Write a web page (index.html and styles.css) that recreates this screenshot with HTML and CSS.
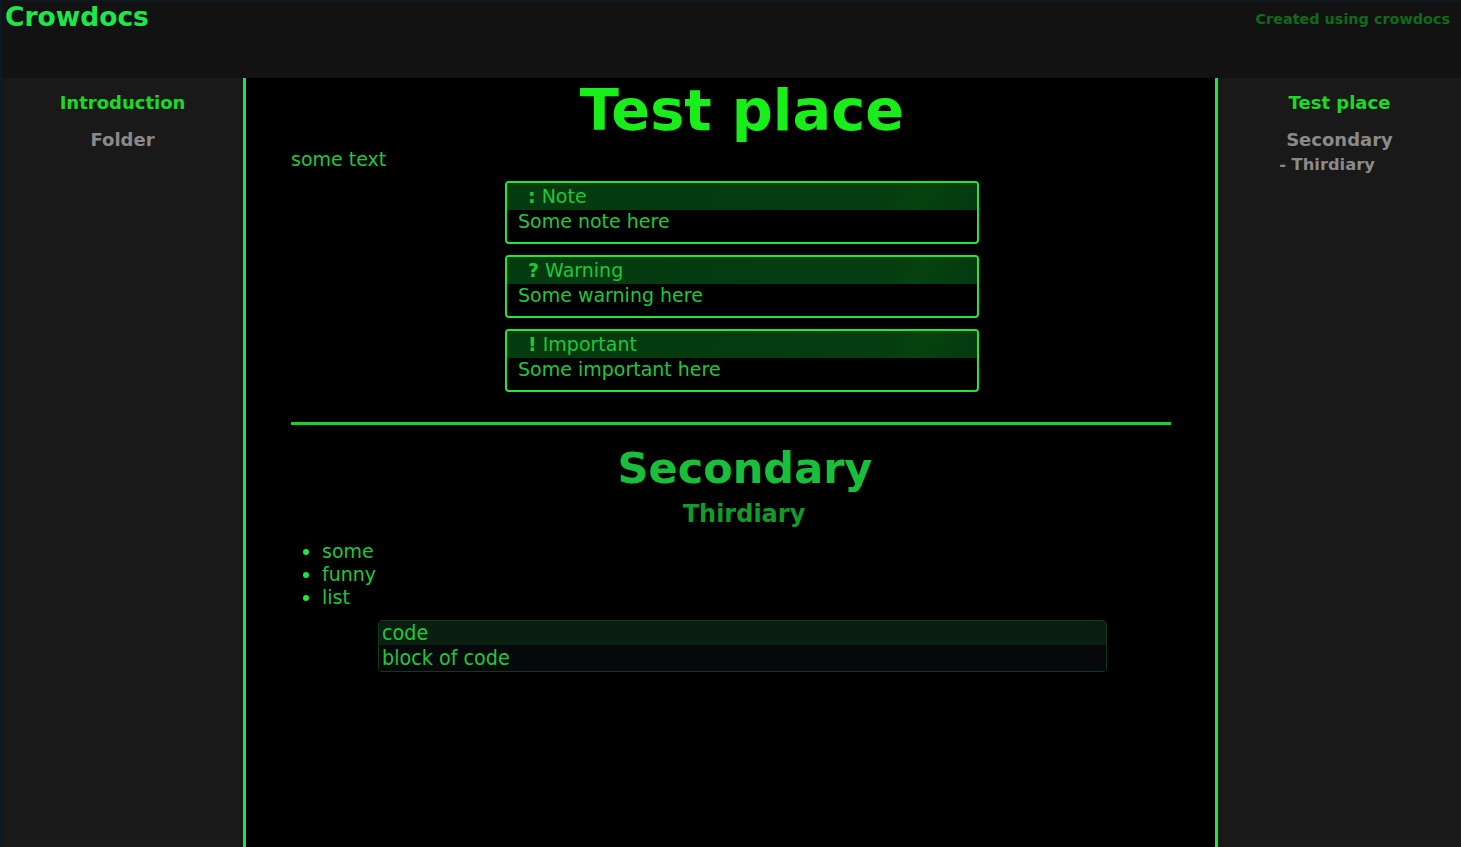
FILE: index.html
```html
<!DOCTYPE html>
<html>
<head>
<meta charset="utf-8">
<link rel="stylesheet" href="styles.css">
</head>
<body>
<header class="topbar">
  <div class="brand">Crowdocs</div>
  <div class="credit">Created using crowdocs</div>
</header>
<div class="layout">
  <nav class="side side-left">
    <div class="nav-active">Introduction</div>
    <div class="nav-item">Folder</div>
  </nav>
  <main class="main">
    <h1 class="title">Test place</h1>
    <p class="para">some text</p>
    <div class="callouts">
      <div class="callout">
        <div class="callout-head"><span class="ico">:</span> Note</div>
        <div class="callout-body">Some note here</div>
      </div>
      <div class="callout">
        <div class="callout-head"><span class="ico">?</span> Warning</div>
        <div class="callout-body">Some warning here</div>
      </div>
      <div class="callout">
        <div class="callout-head"><span class="ico">!</span> Important</div>
        <div class="callout-body">Some important here</div>
      </div>
    </div>
    <hr class="rule">
    <h2 class="h2">Secondary</h2>
    <h3 class="h3">Thirdiary</h3>
    <ul class="list">
      <li>some</li>
      <li>funny</li>
      <li>list</li>
    </ul>
    <div class="code">
      <div class="code-head">code</div>
      <div class="code-body">block of code</div>
    </div>
  </main>
  <nav class="side side-right">
    <div class="nav-active">Test place</div>
    <div class="nav-item">Secondary</div>
    <div class="nav-sub">- Thirdiary</div>
  </nav>
</div>
</body>
</html>
```
FILE: styles.css
```css
* { box-sizing: border-box; }
html, body { margin: 0; padding: 0; height: 100%; }
body {
  background: #121212;
  font-family: "DejaVu Sans", "Liberation Sans", sans-serif;
  color: #1ec83c;
  overflow: hidden;
  border-left: 2px solid #0c1a26;
  border-top: 1px solid #0c1a26;
}
.topbar {
  height: 77px;
  background: #121212;
  display: flex;
  justify-content: space-between;
  align-items: flex-start;
  padding: 0 11px 0 3px;
}
.brand {
  font-size: 26.5px;
  font-weight: bold;
  color: #1de84a;
  line-height: 31px;
}
.credit {
  font-size: 14.4px;
  font-weight: bold;
  color: #0f6a1a;
  margin-top: 10px;
}
.layout {
  display: flex;
  height: 770px;
}
.side {
  width: 241px;
  background: #191919;
  display: flex;
  flex-direction: column;
  align-items: center;
  padding-top: 12px;
  font-weight: bold;
}
.side-right { width: 243px; }
.nav-active {
  color: #19dc22;
  font-size: 18px;
  line-height: 26px;
}
.nav-item {
  color: #8a8a8a;
  font-size: 18px;
  margin-top: 11px;
  line-height: 26px;
}
.nav-sub {
  color: #8a8a8a;
  font-size: 16.3px;
  line-height: 24px;
  margin-right: 25px;
}
.main {
  width: 975px;
  background: #000;
  border-left: 3px solid #1be83e;
  border-right: 3px solid #1be83e;
  padding: 0 44px 0 45px;
}
.title {
  margin: 0;
  text-align: center;
  font-size: 57.4px;
  font-weight: bold;
  color: #1aee1a;
  line-height: 64px;
  padding-left: 22px;
  margin-top: 1px;
}
.para {
  margin: 0;
  font-size: 19px;
  line-height: 22px;
  color: #1ec83c;
  margin-top: 5px;
}
.callouts {
  display: flex;
  flex-direction: column;
  align-items: center;
  gap: 11px;
  padding-left: 22px;
  margin-top: 11px;
}
.callout {
  width: 474px;
  height: 63px;
  border: 2px solid #1fe53c;
  border-radius: 4px;
  overflow: hidden;
  background: #000;
}
.callout-head {
  height: 27px;
  background: linear-gradient(118deg, #033a0e 0%, #043d0f 80%, #06430f 87%, #043d0f 94%, #033a0e 100%);
  font-size: 19px;
  line-height: 26px;
  padding-left: 21px;
  color: #1ec83c;
}
.ico { font-weight: bold; }
.callout-body {
  font-size: 19px;
  line-height: 22px;
  padding-left: 11px;
  color: #1ec83c;
}
.rule {
  border: none;
  height: 3px;
  background: #16d42a;
  margin: 30px 0 0 0;
}
.h2 {
  margin: 20px 0 0 0;
  text-align: center;
  font-size: 43px;
  font-weight: bold;
  line-height: 46px;
  color: #19bf3a;
  padding-left: 28px;
}
.h3 {
  margin: 10px 0 0 0;
  text-align: center;
  font-size: 24px;
  font-weight: bold;
  line-height: 26px;
  color: #139a2a;
  padding-left: 26px;
}
.list {
  margin: 13px 0 0 0;
  padding-left: 31px;
  font-size: 19px;
  line-height: 23px;
  color: #1ec83c;
}
.list li::marker { color: #1ae83a; }
.code {
  width: 729px;
  margin: 11px 0 0 87px;
  border: 1px solid #0f3a17;
  border-radius: 4px;
  overflow: hidden;
  font-family: "DejaVu Sans Condensed", "DejaVu Sans", sans-serif;
  font-stretch: condensed;
  font-size: 21.3px;
  color: #1ec83c;
}
.code-head {
  background: #0b1f10;
  height: 24px;
  line-height: 24px;
  padding-left: 3px;
}
.code-body {
  background: #05090b;
  height: 26px;
  line-height: 25px;
  padding-left: 3px;
}
```
